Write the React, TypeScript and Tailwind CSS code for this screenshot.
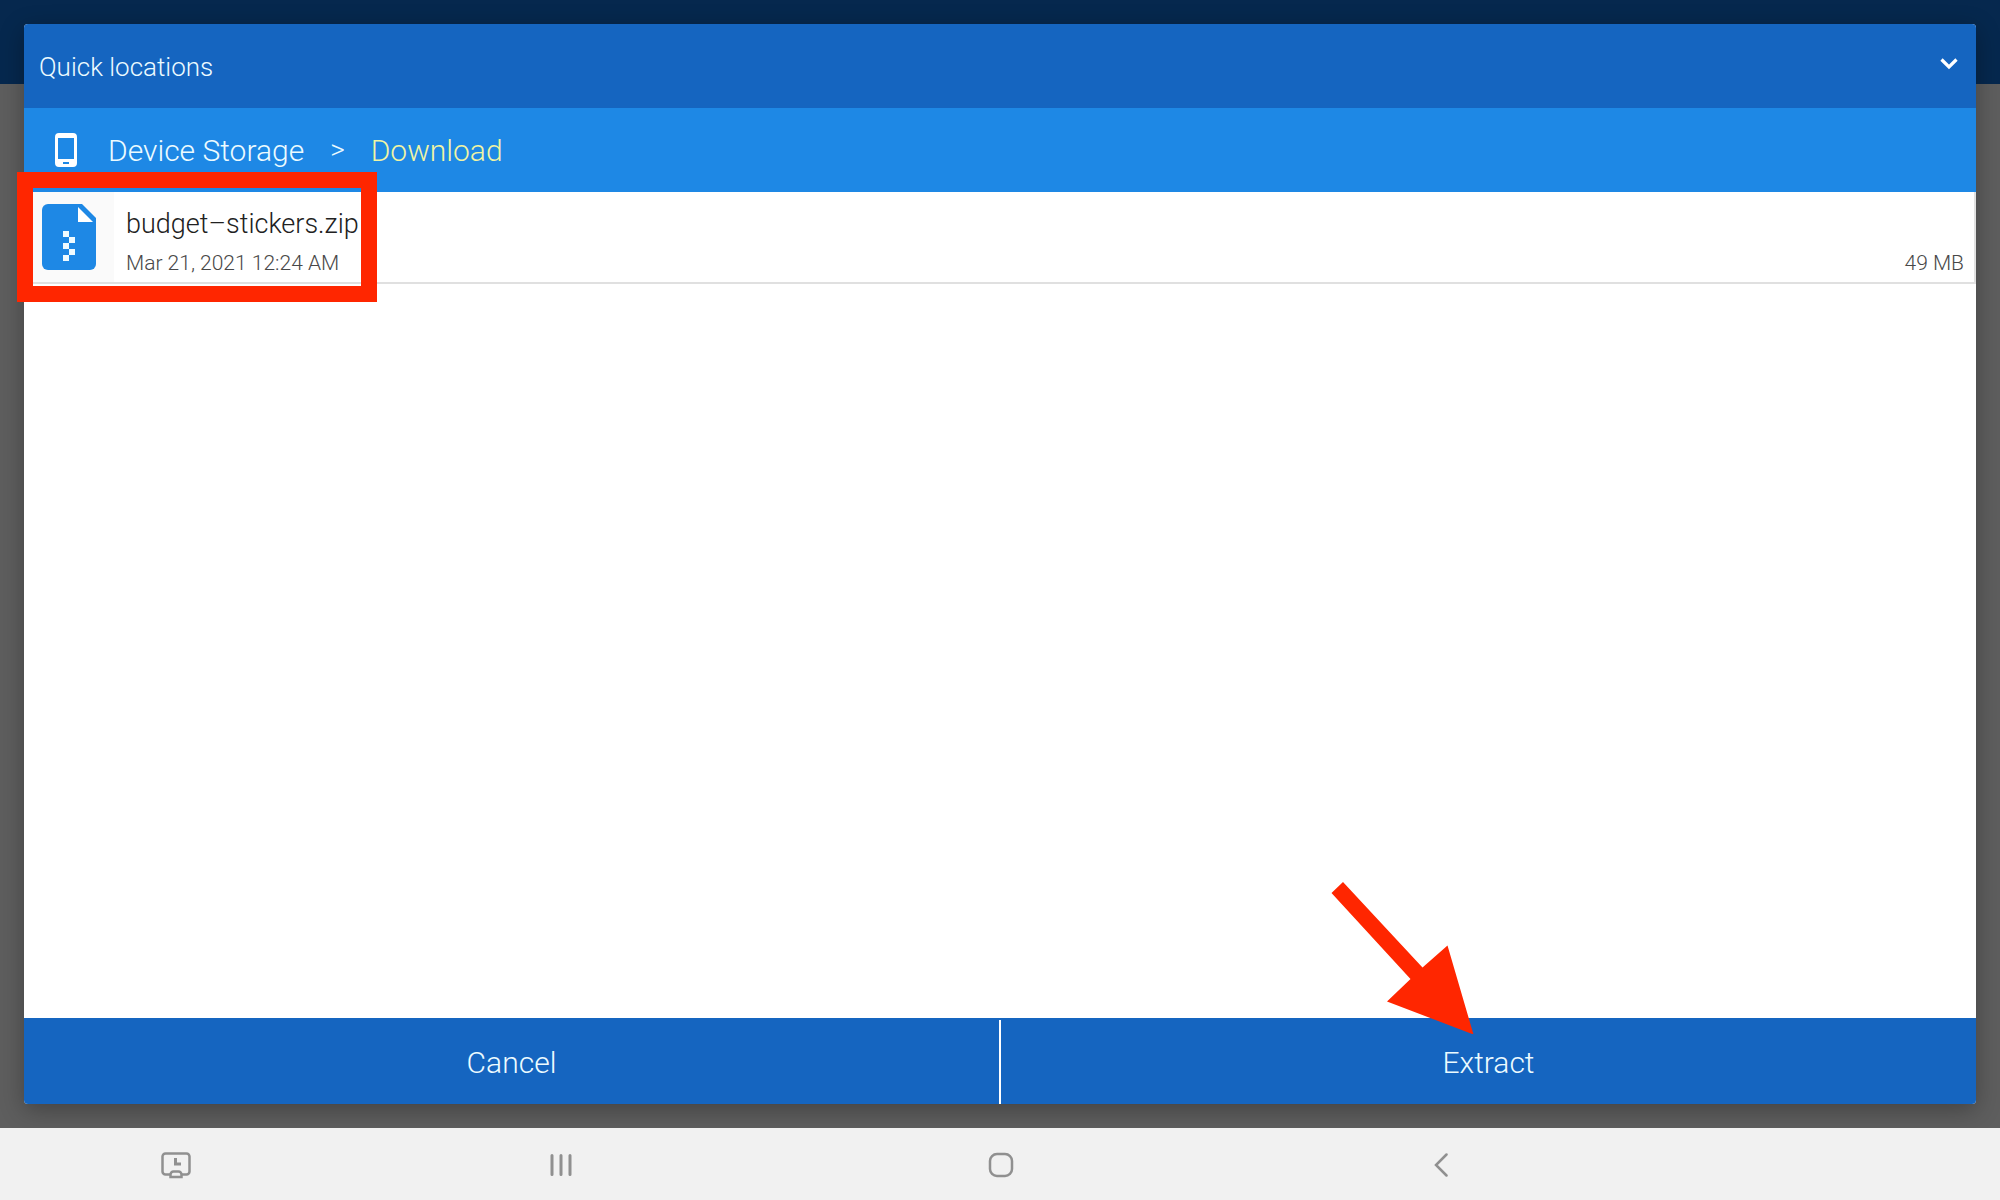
type FileItem = {
  name: string;
  modified: string;
  size: string;
};

const files: FileItem[] = [
  { name: "budget–stickers.zip", modified: "Mar 21, 2021 12:24 AM", size: "49 MB" },
];

function PhoneIcon() {
  return (
    <svg width="22" height="34" viewBox="0 0 22 34" aria-hidden="true">
      <path
        fill="#fff"
        fillRule="evenodd"
        d="M4 0h14a4 4 0 0 1 4 4v26a4 4 0 0 1-4 4H4a4 4 0 0 1-4-4V4a4 4 0 0 1 4-4ZM3 5v21h16V5ZM8 29v2h6v-2Z"
      />
    </svg>
  );
}

function ZipIcon() {
  return (
    <svg width="54" height="66" viewBox="0 0 54 66" aria-hidden="true">
      <path
        fill="#1e88e5"
        d="M6 0h34l14 14v46a6 6 0 0 1-6 6H6a6 6 0 0 1-6-6V6a6 6 0 0 1 6-6Z"
      />
      <path fill="#fff" d="M36 3l15 15H36Z" />
      <path
        fill="#f0fbff"
        d="M21 27h6v6h-6ZM27 33h6v6h-6ZM21 39h6v6h-6ZM27 45h6v6h-6ZM21 51h6v6h-6Z"
      />
    </svg>
  );
}

function FileRow({ file }: { file: FileItem }) {
  return (
    <button
      type="button"
      className="flex w-full items-stretch border-r-2 border-b-2 border-[#e0e0e0] bg-white text-left"
    >
      <span className="flex size-[90px] shrink-0 items-center justify-center bg-[#fafafa]">
        <ZipIcon />
      </span>
      <span className="flex flex-1 items-end justify-between pr-[10px] pb-[3px] pl-3">
        <span className="flex flex-col">
          <span className="text-[27px] leading-[46px] text-[#212121]">{file.name}</span>
          <span className="text-[21px] leading-8 text-[#484848]">{file.modified}</span>
        </span>
        <span className="text-[21px] leading-8 text-[#484848]">{file.size}</span>
      </span>
    </button>
  );
}

export default function App() {
  return (
    <div className="flex min-h-screen flex-col font-['Roboto',sans-serif] font-light">
      <main className="flex flex-1 flex-col bg-[linear-gradient(#06284e_84px,#5e5e5e_84px)] p-6">
        <div className="relative flex flex-1 flex-col rounded-sm bg-white shadow-[0_6px_24px_rgba(0,0,0,0.3)]">
          <button
            type="button"
            className="flex h-[84px] items-center justify-between rounded-t-sm bg-[#1565c0] pt-[2px] pr-[18px] pl-[15px] text-[26px] text-[#ecfbff]"
          >
            Quick locations
            <svg width="18" height="12" viewBox="0 0 18 12" className="mb-[6px]" aria-hidden="true">
              <path d="M1.500 1.500 9 9l7.500-7.500" fill="none" stroke="#fff" strokeWidth="3.200" />
            </svg>
          </button>

          <nav
            aria-label="Path"
            className="flex h-[84px] items-center bg-[#1e88e5] pl-[31px] text-[30px] text-[#ecfbff]"
          >
            <PhoneIcon />
            <a href="#storage" className="ml-[31px]">
              Device Storage
            </a>
            <span className="mx-[26px] text-[28px]">&gt;</span>
            <a href="#download" className="text-[#f0f4a4]">
              Download
            </a>
          </nav>

          <ul className="flex-1">
            {files.map((file) => (
              <li key={file.name}>
                <FileRow file={file} />
              </li>
            ))}
          </ul>

          <div className="flex h-[86px] rounded-b-sm bg-[#1565c0] pt-[2px] text-[30px] text-[#ecfbff]">
            <button type="button" className="flex-1">
              Cancel
            </button>
            <div className="w-[2px] bg-white" />
            <button type="button" className="flex-1">
              Extract
            </button>
          </div>

          {/* highlight around the selected archive */}
          <div className="pointer-events-none absolute top-[148px] -left-[7px] h-[130px] w-[360px] border-16 border-[#ff2600]" />

          {/* arrow pointing at Extract */}
          <svg
            width="144"
            height="154"
            viewBox="0 0 144 154"
            className="pointer-events-none absolute right-[502px] bottom-[70px]"
            aria-hidden="true"
          >
            <path
              fill="#ff2600"
              d="M1.500 13 13 2l79.500 85.500L117.500 65.500l26 89L57 121.500 80.500 99Z"
            />
          </svg>
        </div>
      </main>

      <footer className="relative flex h-[72px] items-center bg-[#f1f1f1] pt-[2px] pl-[2px] text-[#909090]">
        <div className="flex flex-[17] justify-center">
          <button type="button" aria-label="Screenshot" className="ml-2">
            <svg width="30" height="27" viewBox="0 0 30 27" fill="none" stroke="currentColor" aria-hidden="true">
              <path
                strokeWidth="2.500"
                d="M9 22.500H4.500a3 3 0 0 1-3-3V4.500a3 3 0 0 1 3-3h21a3 3 0 0 1 3 3v15a3 3 0 0 1-3 3H21"
              />
              <path strokeWidth="2.500" d="M9.500 25v-2.500a3 3 0 0 1 3-3h5a3 3 0 0 1 3 3V25Z" />
              <path strokeWidth="3" d="M14.500 6v6h5.500" />
            </svg>
          </button>
        </div>
        <div className="flex flex-[22] justify-center">
          <button type="button" aria-label="Recent apps">
            <svg width="22" height="24" viewBox="0 0 22 24" aria-hidden="true">
              <path
                d="M2 2.500v19M11 2.500v19M20 2.500v19"
                stroke="currentColor"
                strokeWidth="3"
                strokeLinecap="round"
              />
            </svg>
          </button>
        </div>
        <div className="flex flex-[22] justify-center">
          <button type="button" aria-label="Home">
            <svg width="26" height="26" viewBox="0 0 26 26" aria-hidden="true">
              <rect
                x="2"
                y="2"
                width="22"
                height="22"
                rx="7"
                fill="none"
                stroke="currentColor"
                strokeWidth="2.500"
              />
            </svg>
          </button>
        </div>
        <div className="flex flex-[22] justify-center">
          <button type="button" aria-label="Back">
            <svg width="14" height="24" viewBox="0 0 14 24" aria-hidden="true">
              <path
                d="M12.500 1.500 2 12l10.500 10.500"
                fill="none"
                stroke="currentColor"
                strokeWidth="2.500"
                strokeLinecap="round"
              />
            </svg>
          </button>
        </div>
        <div className="flex-[17]" />
      </footer>
    </div>
  );
}
